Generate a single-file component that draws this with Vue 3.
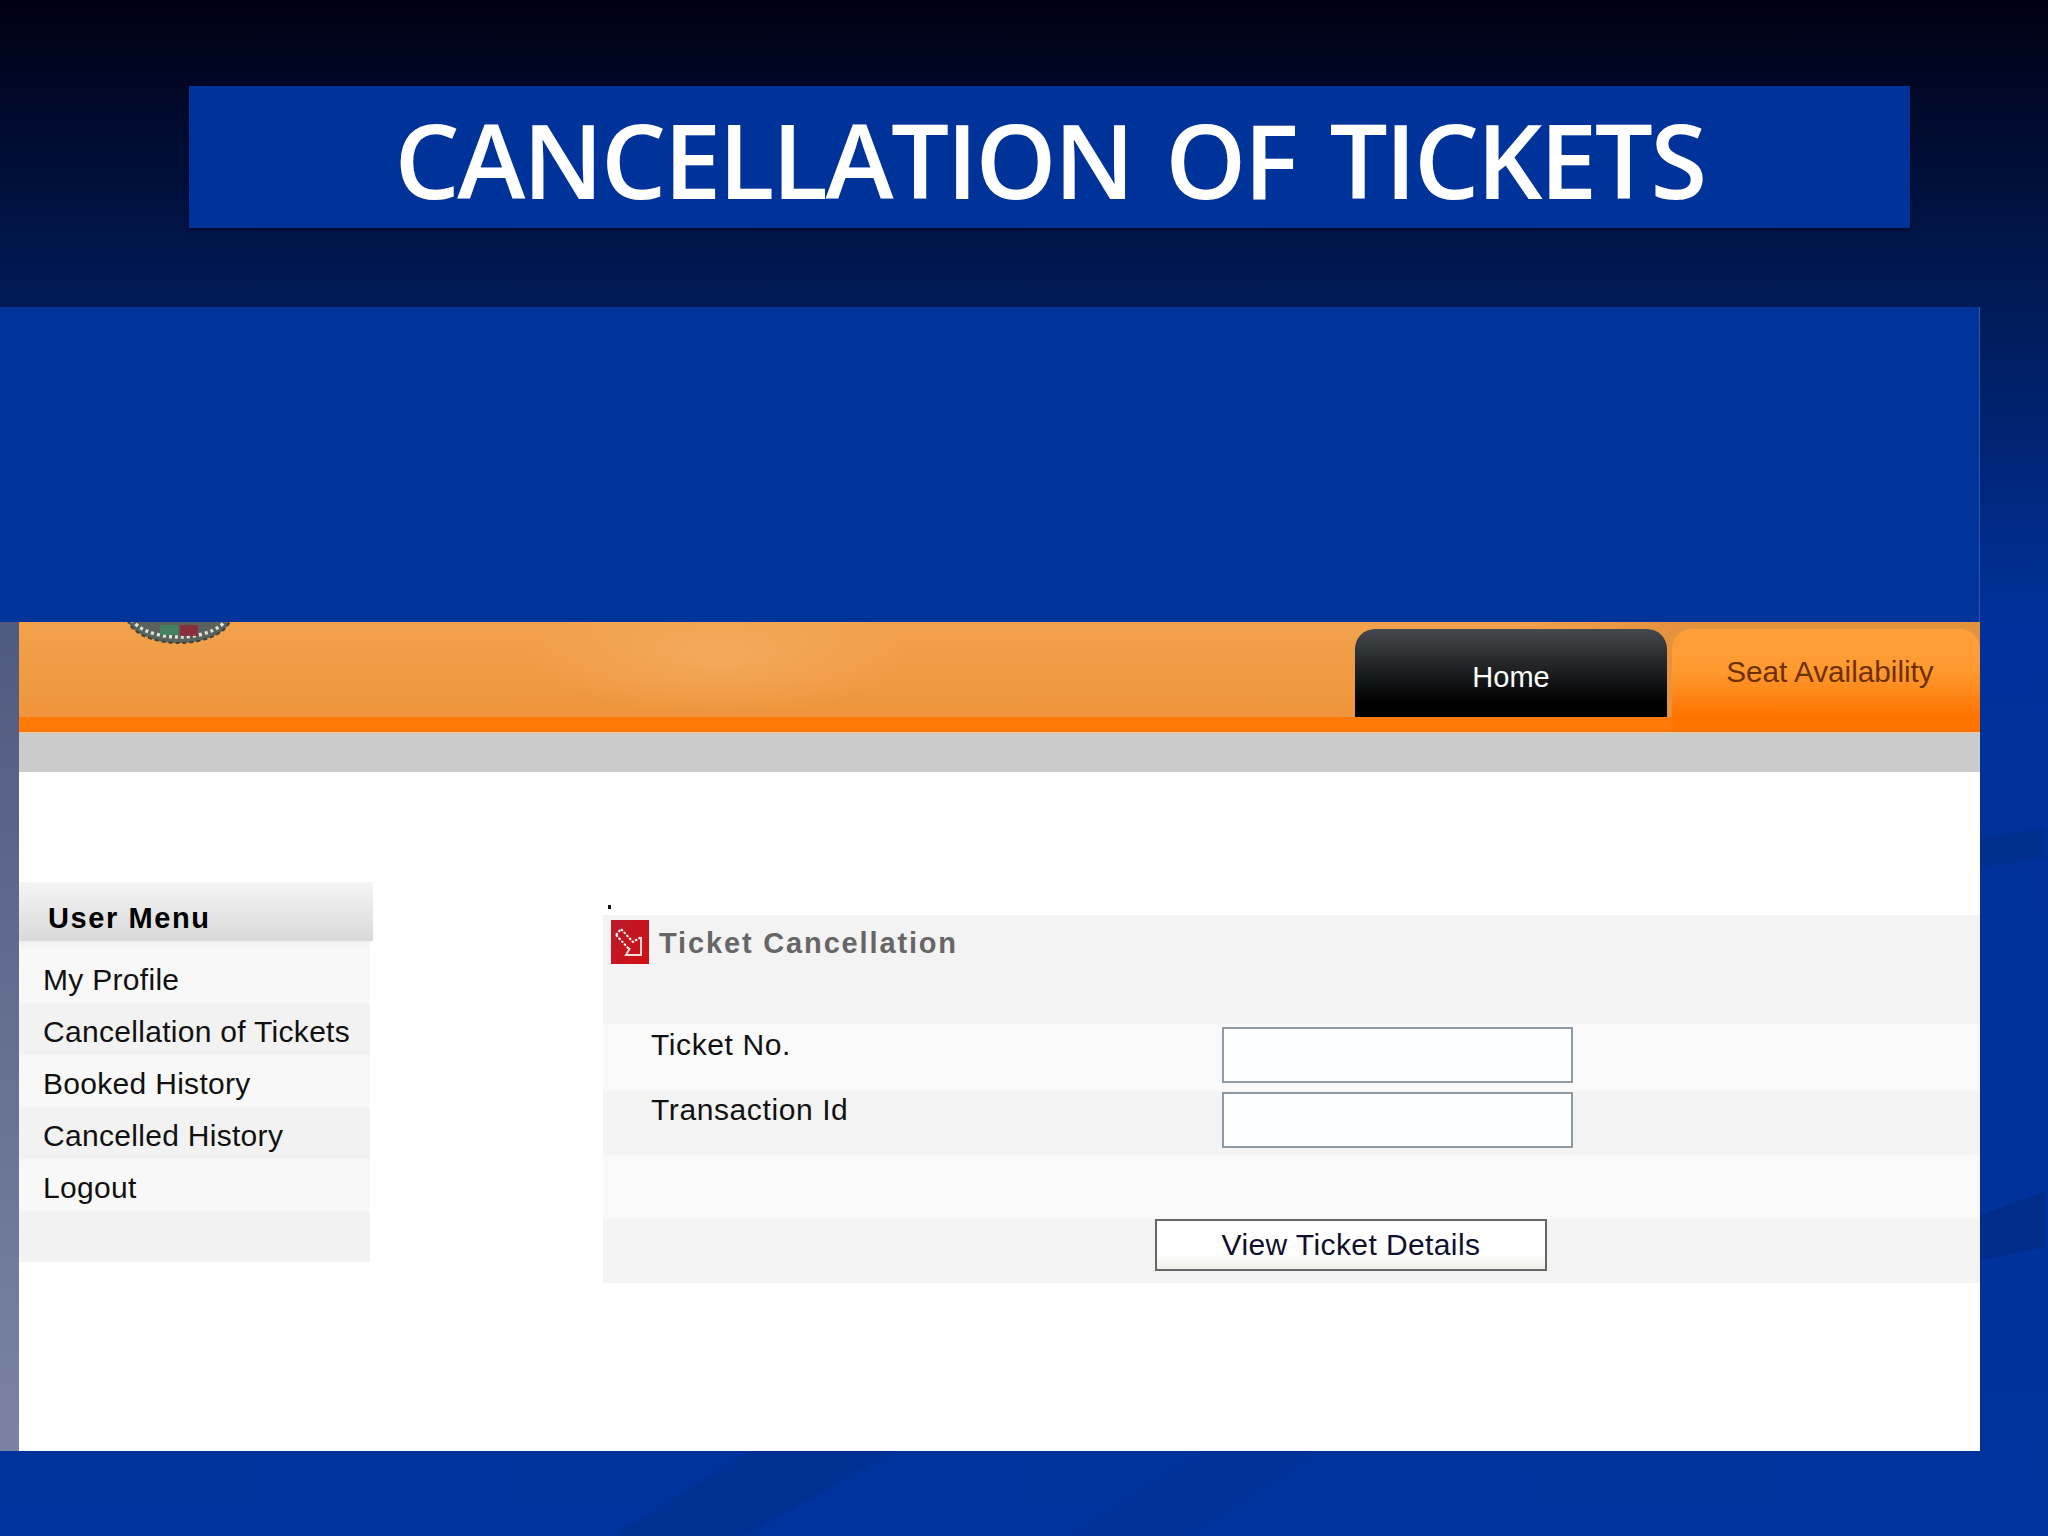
<script setup>
const menuItems = ['My Profile', 'Cancellation of Tickets', 'Booked History', 'Cancelled History', 'Logout', '']
</script>

<template>
  <div class="slide">
    <svg class="decor" viewBox="0 0 2048 1536" aria-hidden="true">
      <polygon points="1980,838 2045,828 2045,858 1980,867" fill="#002f8f" />
      <polygon points="1980,1215 2045,1192 2045,1247 1980,1260" fill="#002d89" />
      <polygon points="750,1451 894,1451 744,1536 614,1536" fill="#003092" />
      <polygon points="1201,1451 1318,1451 1188,1536 1070,1536" fill="#003297" />
    </svg>

    <header class="title-area">
      <h1 class="title">CANCELLATION OF TICKETS</h1>
    </header>

    <div class="banner"></div>

    <section class="shot">
      <div class="sliver"></div>
      <div class="page">
        <div class="head">
          <svg class="emblem" viewBox="0 0 122 40" aria-hidden="true">
            <defs>
              <radialGradient id="glow" cx="50%" cy="0%" r="60%">
                <stop offset="0.72" stop-color="#b76c2a" stop-opacity="0.5" />
                <stop offset="1" stop-color="#f2a24e" stop-opacity="0" />
              </radialGradient>
            </defs>
            <ellipse cx="61" cy="0" rx="61" ry="32" fill="url(#glow)" />
            <ellipse cx="61" cy="-6" rx="52" ry="27" fill="#59625c" />
            <ellipse cx="61" cy="-9" rx="49" ry="24" fill="none" stroke="#dfe3d8" stroke-width="3.5" stroke-dasharray="3 3" />
            <rect x="42" y="3" width="18" height="10" fill="#3f8a63" opacity="0.8" />
            <rect x="62" y="3" width="18" height="11" fill="#8f2734" opacity="0.85" />
            <ellipse cx="61" cy="-6" rx="52" ry="27" fill="none" stroke="#2c302c" stroke-width="2" stroke-dasharray="4 3" opacity="0.8" />
          </svg>
          <nav class="tabs">
            <a class="tab tab-home">Home</a>
            <a class="tab tab-seat">Seat Availability</a>
          </nav>
        </div>
        <div class="strip"></div>
        <div class="body">
          <aside class="menu">
            <div class="menu-head">User Menu</div>
            <div class="menu-gap"></div>
            <ul class="menu-list">
              <li v-for="(item, i) in menuItems" :key="i" class="menu-row" :class="{ alt: i % 2 === 1 }">{{ item }}</li>
            </ul>
          </aside>
          <main class="panel">
            <span class="dot"></span>
            <div class="panel-head">
              <svg class="panel-icon" viewBox="0 0 38 44" aria-hidden="true">
                <defs>
                  <linearGradient id="red" x1="0" y1="0" x2="1" y2="1">
                    <stop offset="0" stop-color="#b81a2a" />
                    <stop offset="1" stop-color="#d30f14" />
                  </linearGradient>
                </defs>
                <rect width="38" height="44" fill="url(#red)" />
                <path d="M5 15 L10 9 L22 22 L30 17" fill="none" stroke="#fff" stroke-width="2" stroke-dasharray="2.5 1.5" />
                <path d="M5 15 L18 29" fill="none" stroke="#fff" stroke-width="2" stroke-dasharray="2.5 1.5" />
                <path d="M30 17 V35 H15 L19 28" fill="none" stroke="#f6dcdc" stroke-width="2" />
              </svg>
              <h2 class="panel-title">Ticket Cancellation</h2>
            </div>
            <div class="field light">
              <label class="field-label">Ticket No.</label>
              <input class="field-input" type="text" />
            </div>
            <div class="field dark">
              <label class="field-label">Transaction Id</label>
              <input class="field-input" type="text" />
            </div>
            <div class="spacer"></div>
            <div class="actions">
              <button class="submit" type="button">View Ticket Details</button>
            </div>
          </main>
        </div>
      </div>
    </section>
  </div>
</template>

<style>
html, body { margin: 0; padding: 0; }
</style>

<style scoped>
.slide {
  position: relative;
  width: 2048px;
  height: 1536px;
  overflow: hidden;
  display: flex;
  flex-direction: column;
  background: linear-gradient(to bottom, #000012 0, #001b58 307px, #00319a 622px, #00339b 100%);
  font-family: "Liberation Sans", Arial, sans-serif;
}
.decor {
  position: absolute;
  inset: 0;
  width: 2048px;
  height: 1536px;
}
.title-area {
  position: relative;
  height: 307px;
  box-sizing: border-box;
  padding: 86px 138px 0 189px;
}
.title {
  margin: 0;
  height: 142px;
  background: #003399;
  box-shadow: 0 2px 3px rgba(0, 0, 30, 0.7);
  color: #fff;
  font-family: "Open Sans", sans-serif;
  font-weight: 600;
  font-size: 103px;
  letter-spacing: -2.55px;
  word-spacing: 9px;
  line-height: 147px;
  text-align: center;
  white-space: nowrap;
}
.banner {
  position: relative;
  width: 1980px;
  height: 315px;
  background: #00349b;
  box-shadow: inset -1px 0 0 #2f55a8;
}
.shot {
  position: relative;
  width: 1980px;
  height: 829px;
  display: flex;
}
.sliver {
  width: 19px;
  background: linear-gradient(to bottom, #4f5b7e, #7a83a3);
}
.page {
  flex: 1;
  display: flex;
  flex-direction: column;
  background: #fff;
}
.head {
  position: relative;
  height: 111px;
  overflow: hidden;
  display: flex;
  justify-content: flex-end;
  border-bottom: 1px solid #f4c593;
  box-sizing: border-box;
  background:
    linear-gradient(to bottom, transparent 95px, #ff7a08 95px),
    radial-gradient(ellipse 190px 60px at 700px 32px, rgba(245, 174, 100, 0.75) 0, rgba(244, 171, 94, 0) 100%),
    linear-gradient(to right, rgba(226, 140, 60, 0) 1500px, #e5923f 1660px),
    linear-gradient(to bottom, #f2a14d, #ee9338);
}
.emblem {
  position: absolute;
  left: 99px;
  top: 0;
  width: 122px;
  height: 40px;
}
.tabs {
  display: flex;
  align-items: flex-start;
  gap: 5px;
  padding-top: 7px;
}
.tab {
  box-sizing: border-box;
  text-align: center;
  font-size: 29px;
  border-radius: 20px 20px 0 0;
}
.tab-home {
  width: 312px;
  height: 88px;
  background: linear-gradient(to bottom, #45484d, #2c2e31 30%, #000 85%);
  color: #fff;
  line-height: 96px;
}
.tab-seat {
  width: 308px;
  height: 103px;
  padding-left: 8px;
  background: linear-gradient(to bottom, #ffa03c, #ff9a30 40%, #ff7300 85%);
  color: #6e3000;
  font-size: 29.7px;
  line-height: 86px;
}
.strip {
  height: 39px;
  background: #cbcbcc;
}
.body {
  flex: 1;
  display: flex;
  align-items: flex-start;
}
.menu {
  width: 354px;
  margin-top: 110px;
}
.menu-head {
  height: 59px;
  box-sizing: border-box;
  padding: 3px 0 0 29px;
  background: linear-gradient(to bottom, #f5f5f5, #d9d9da);
  color: #000;
  font-weight: 700;
  font-size: 29px;
  letter-spacing: 1.6px;
  line-height: 66px;
}
.menu-gap {
  height: 10px;
  width: 351px;
  background: linear-gradient(to bottom, #efeff0, #fafafa);
}
.menu-list {
  margin: 0;
  padding: 0;
  list-style: none;
  width: 351px;
}
.menu-row {
  height: 52px;
  box-sizing: border-box;
  padding: 5px 0 0 24px;
  background: #f9f8f9;
  color: #111;
  font-size: 30px;
  letter-spacing: 0.3px;
  line-height: 48px;
  white-space: nowrap;
}
.menu-row.alt { background: #f3f2f3; }
.menu-row:last-child { height: 51px; }
.panel {
  position: relative;
  flex: 1;
  margin: 143px 0 0 230px;
}
.dot {
  position: absolute;
  left: 5px;
  top: -10px;
  width: 3px;
  height: 4px;
  background: #111;
}
.panel-head {
  height: 109px;
  box-sizing: border-box;
  padding: 5px 0 0 8px;
  display: flex;
  align-items: flex-start;
  gap: 10px;
  background: #f3f3f4;
}
.panel-icon {
  width: 38px;
  height: 44px;
  flex: none;
}
.panel-title {
  margin: 0;
  color: #666;
  font-weight: 700;
  font-size: 29px;
  letter-spacing: 1.85px;
  line-height: 46px;
}
.field {
  box-sizing: border-box;
  display: grid;
  grid-template-columns: 619px 351px;
  align-items: start;
}
.field.light {
  height: 67px;
  padding-top: 3px;
  background: #f9f9fa;
}
.field.dark {
  height: 64px;
  padding-top: 1px;
  background: #f3f3f4;
}
.field-label {
  padding: 1px 0 0 48px;
  color: #111;
  font-size: 30px;
  letter-spacing: 0.6px;
  line-height: 34px;
}
.field-input {
  box-sizing: border-box;
  width: 351px;
  height: 56px;
  margin: 0;
  padding: 0;
  background: #fdfeff;
  border: 2px solid #8f9aa3;
  border-radius: 0;
  outline: none;
}
.spacer {
  height: 64px;
  background: #f9f9fa;
}
.actions {
  box-sizing: border-box;
  height: 64px;
  padding-left: 552px;
  background: #f3f3f4;
}
.submit {
  display: block;
  box-sizing: border-box;
  width: 392px;
  height: 52px;
  margin: 0;
  padding: 0;
  background: linear-gradient(to bottom, #fff 70%, #eeeee8);
  border: 2px solid #666;
  border-radius: 0;
  color: #10102e;
  font-family: "Liberation Sans", Arial, sans-serif;
  font-size: 30px;
  letter-spacing: 0.4px;
}
</style>
